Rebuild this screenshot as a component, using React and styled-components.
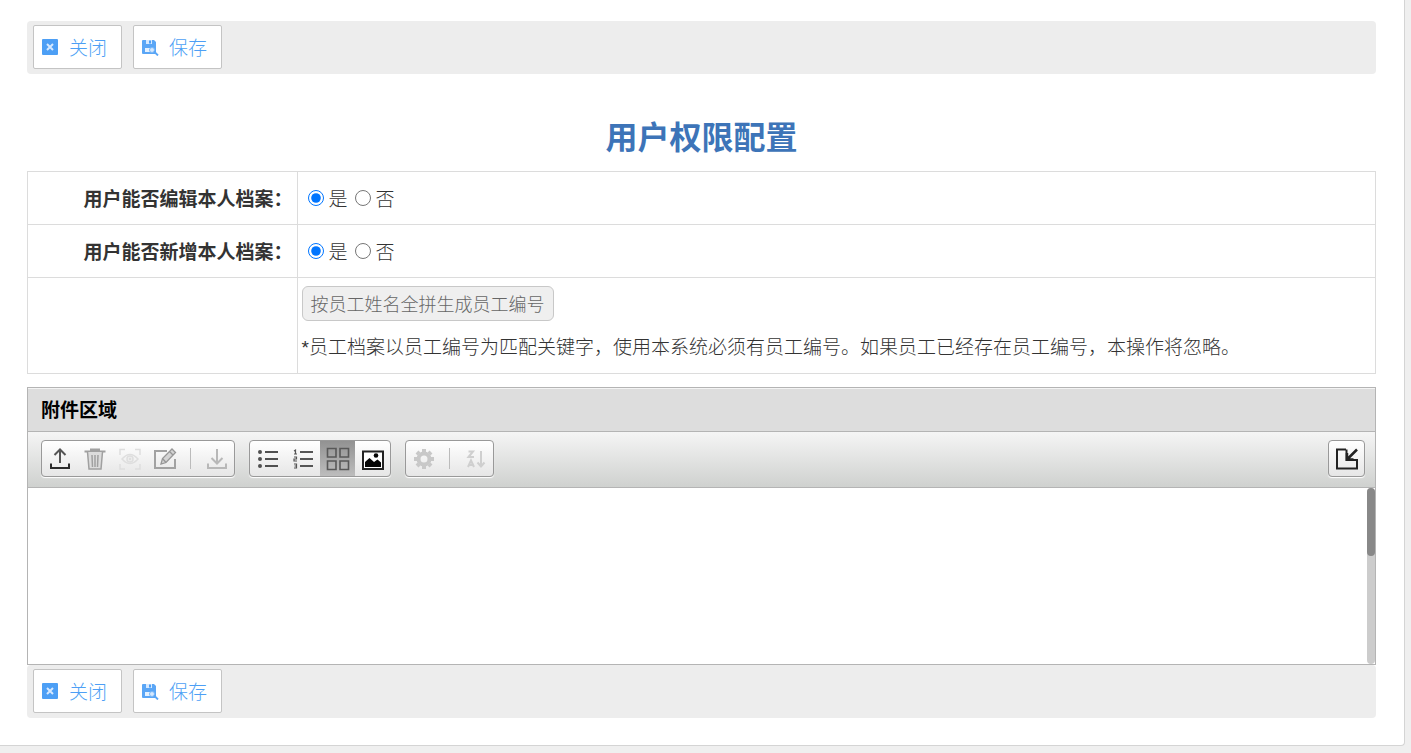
import styled, { createGlobalStyle } from "styled-components";
import { useState } from "react";

const GlobalStyle = createGlobalStyle`
  * {
    box-sizing: border-box;
  }
  body {
    margin: 0;
    background-color: #efefef;
    color: #333;
    font-family: "Noto Sans", "Noto Sans CJK SC", sans-serif;
    font-size: 19px;
    font-weight: 300;
  }
  button, input {
    font: inherit;
  }
`;

const Page = styled.main`
  margin: 0 6px 7px 0;
  padding: 21px 28px 27px 27px;
  background-color: #fff;
  border: 1px solid #d4d4d4;
  border-width: 0 1px 1px 0;
  border-radius: 0 0 4px 0;
`;

const Bar = styled.div`
  display: flex;
  gap: 11px;
  padding: 4px 6px 5px;
  background-color: #ededed;
  border-radius: 4px;
`;

const BarButton = styled.button`
  display: flex;
  align-items: center;
  gap: 10px;
  height: 44px;
  padding: 0 14px 0 7px;
  background-color: #fff;
  border: 1px solid #c4c4c4;
  border-radius: 2px;
  color: #4d9ff5;
  cursor: pointer;
`;

const Title = styled.h1`
  margin: 39px 0 10px;
  color: #3d74b8;
  font-size: 32px;
  line-height: 48px;
  font-weight: 700;
  text-align: center;
`;

const Table = styled.table`
  width: 100%;
  border-collapse: collapse;
`;

const HeadCell = styled.th`
  width: 20%;
  height: 53px;
  padding: 0 4px;
  border: 1px solid #dcdcdc;
  font-weight: 700;
  text-align: right;
`;

const Cell = styled.td`
  padding: 0 4px;
  border: 1px solid #dcdcdc;
`;

const RadioGroup = styled.div`
  display: flex;
  gap: 7px;
  padding-left: 6px;
`;

const RadioLabel = styled.label`
  display: flex;
  align-items: center;
  gap: 5px;
`;

const Radio = styled.input`
  width: 16px;
  height: 16px;
  margin: 0;
`;

const GenerateButton = styled.button`
  display: block;
  height: 35px;
  margin-top: 8px;
  padding: 0 8px;
  background-color: #efefef;
  border: 1px solid #c8c8c8;
  border-radius: 6px;
  color: #666;
  font-size: 18px;
  line-height: 24px;
  cursor: pointer;
`;

const Note = styled.p`
  margin: 13px 0 11px;
  font-family: "Liberation Sans", "Noto Sans CJK SC", sans-serif;
  line-height: 28px;
`;

const Attachment = styled.section`
  margin-top: 13px;
  border: 1px solid #b4b4b4;
`;

const AttachmentTitle = styled.h2`
  margin: 0;
  padding: 1px 13px 0;
  background-color: #ddd;
  border-top: 1px solid #f4f4f4;
  border-bottom: 1px solid #b4b4b4;
  color: #000;
  font-size: 19px;
  line-height: 41px;
  font-weight: 700;
`;

const Toolbar = styled.div`
  display: flex;
  gap: 14px;
  padding: 8px 10px 10px 13px;
  background-image: linear-gradient(#f5f5f5, #cfd1cf);
  border-bottom: 1px solid #b4b4b4;
`;

const ToolGroup = styled.div`
  display: flex;
  align-items: center;
  height: 37px;
  border: 1px solid #999;
  border-radius: 4px;
  background-image: linear-gradient(#fff, #e6e6e6);
  box-shadow: 0 1px 1px #fff;
`;

const Tool = styled.button.attrs({ type: "button" })`
  display: flex;
  align-items: center;
  justify-content: center;
  width: 35px;
  height: 35px;
  padding: 0;
  border: 0;
  cursor: pointer;
  background: ${({ $active }) =>
    $active ? "linear-gradient(#929292, #bdbdbd)" : "transparent"};
`;

const Separator = styled.span`
  width: 1px;
  height: 21px;
  margin: 0 8px;
  background-color: #bbb;
`;

const Spacer = styled.div`
  flex: 1;
`;

const FileArea = styled.div`
  display: flex;
  justify-content: flex-end;
  height: 176px;
  background-color: #fff;
`;

const Track = styled.div`
  width: 8px;
  background-color: #ccc;
  border-radius: 4px;
`;

const Thumb = styled.div`
  height: 68px;
  background-color: #888;
  border-radius: 4px;
`;

const CloseIcon = () => (
  <svg width="18" height="18" viewBox="0 0 18 18">
    <rect x="1" y="1" width="16" height="16" rx="1" fill="#4d9ff5" />
    <path d="M6 6l6 6M12 6l-6 6" stroke="#d6e9ff" strokeWidth="2" />
  </svg>
);

const SaveIcon = () => (
  <svg width="18" height="18" viewBox="0 0 18 18">
    <path d="M1 3q0-1 1-1h11l2 2v12H2q-1 0-1-1z" fill="#5aa6f6" />
    <path d="M5 2h6v4H5z" fill="#d6e9ff" />
    <path d="M8 2.500h2v3H8z" fill="#4d9ff5" />
    <path d="M4 10h9v4H4z" fill="#e4f1ff" />
    <circle cx="11" cy="12" r="2.500" fill="#d6e9ff" stroke="#7ab8f8" />
    <path d="M13 13.500l4 4" stroke="#5aa6f6" strokeWidth="1.800" />
  </svg>
);

// 工具栏图标统一 24x24
const Icon = ({ children, color = "#333", width = 2 }) => (
  <svg
    width="24"
    height="24"
    viewBox="0 0 24 24"
    fill="none"
    stroke={color}
    strokeWidth={width}
  >
    {children}
  </svg>
);

const UploadIcon = () => (
  <Icon color="#555">
    <path d="M12 3v13M6.500 8L12 2.500 17.500 8" />
    <path d="M3 16.500V21h18v-4.500" stroke="#2a2a2a" />
  </Icon>
);

const TrashIcon = () => (
  <Icon color="#a0a0a0" width={1.5}>
    <path d="M1.500 4.500h21M8 4V2.500h8V4" strokeWidth="2" />
    <path d="M4.500 5l1.500 17h12l1.500-17" fill="#dcdcdc" />
    <path d="M9 8l.5 12M12 8v12M15 8l-.5 12" />
  </Icon>
);

const PreviewIcon = () => (
  <Icon color="#dedede" width={1.5}>
    <path d="M2 8V2.500h5M17 2.500h5V8M22 17v5h-5M7 22H2v-5" />
    <path d="M4 12q8-9 16 0q-8 9-16 0z" />
    <circle cx="12" cy="12" r="3" />
    <circle cx="12" cy="12" r=".7" />
  </Icon>
);

const EditIcon = () => (
  <Icon color="#979797">
    <path d="M14 4H2v17h20v-9" stroke="#a2a2a2" />
    <path
      d="M8 17l1.500-5.500L19 2l3.500 3.500-9.500 10z M9.500 11.500l3.500 4M16.500 4.500l3.500 3.500"
      strokeWidth="1.300"
      fill="#d4d4d4"
    />
  </Icon>
);

const DownloadIcon = () => (
  <Icon color="#b8b8b8">
    <path d="M12 2v14M6.500 11l5.500 5.500 5.500-5.500M3 16.500V21h18v-4.500" />
  </Icon>
);

const BulletListIcon = () => (
  <Icon color="#505050">
    <path d="M9 5h13M9 12h13M9 19h13" />
    <circle cx="4" cy="5" r="1" />
    <circle cx="4" cy="12" r="1" />
    <circle cx="4" cy="19" r="1" />
  </Icon>
);

const NumberListIcon = () => (
  <Icon color="#555" width={1.2}>
    <path d="M9 5h13M9 12h13M9 19h13" strokeWidth="2" />
    <path d="M3 4l1.500-1v4M3 7h3M3 10h2.500v2H3v2h3M3 17h2.500v4H3M3.500 19h2" />
  </Icon>
);

const GridIcon = () => (
  <Icon color="#585858" width={1.6}>
    <path d="M1.500 1.500h8.500v8.500H1.500zM14 1.500h8.500v8.500H14zM1.500 14h8.500v8.500H1.500zM14 14h8.500v8.500H14z" />
  </Icon>
);

const ImageIcon = () => (
  <Icon color="#222">
    <path d="M2 4.500h20v17.500H2z" fill="#fff" />
    <path
      d="M4 20v-5l4.500-4 4.500 4 3.500-2.500 3.500 3V20z"
      fill="#050505"
      stroke="none"
    />
    <circle cx="15" cy="8.500" r="2.300" fill="#050505" stroke="none" />
  </Icon>
);

const GearIcon = () => (
  <Icon color="#c8c8c8">
    <circle cx="12" cy="12" r="5.500" strokeWidth="4" />
    <path
      d="M12 2v3M12 19v3M2 12h3M19 12h3M5 5l2 2M17 17l2 2M5 19l2-2M17 7l2-2"
      strokeWidth="4"
    />
  </Icon>
);

const SortIcon = () => (
  <Icon color="#cfcfcf">
    <path d="M4.500 4.500H9L4.500 10H10M4 20l3-6.500L10 20M5.500 18h3" />
    <path d="M17 4v15M13.500 15.500l3.500 4 3.500-4" />
  </Icon>
);

const CollapseIcon = () => (
  <Icon color="#222">
    <path d="M11 2.500H2v19h20V13H11.500V2.500" />
    <path d="M22 2.500l-9.500 9.500M12 6v6.500h6.500" strokeWidth="2.500" />
  </Icon>
);

const ActionBar = () => {
  return (
    <Bar>
      <BarButton type="button">
        <CloseIcon />
        关闭
      </BarButton>
      <BarButton type="button">
        <SaveIcon />
        保存
      </BarButton>
    </Bar>
  );
};

const YesNo = ({ name, labelId }) => {
  const [value, setValue] = useState("是");

  return (
    <RadioGroup role="radiogroup" aria-labelledby={labelId}>
      {["是", "否"].map((item) => (
        <RadioLabel key={item}>
          <Radio
            type="radio"
            name={name}
            checked={value === item}
            onChange={() => setValue(item)}
          />
          {item}
        </RadioLabel>
      ))}
    </RadioGroup>
  );
};

const views = [
  { id: "list", title: "列表", icon: <BulletListIcon /> },
  { id: "detail", title: "详细", icon: <NumberListIcon /> },
  { id: "grid", title: "缩略图", icon: <GridIcon /> },
  { id: "image", title: "图片", icon: <ImageIcon /> },
];

const AttachmentPanel = () => {
  const [view, setView] = useState("grid");

  return (
    <Attachment>
      <AttachmentTitle>附件区域</AttachmentTitle>
      <Toolbar>
        <ToolGroup>
          <Tool aria-label="上传">
            <UploadIcon />
          </Tool>
          <Tool aria-label="删除">
            <TrashIcon />
          </Tool>
          <Tool aria-label="预览">
            <PreviewIcon />
          </Tool>
          <Tool aria-label="编辑">
            <EditIcon />
          </Tool>
          <Separator />
          <Tool aria-label="下载">
            <DownloadIcon />
          </Tool>
        </ToolGroup>
        <ToolGroup>
          {views.map(({ id, title, icon }) => (
            <Tool
              key={id}
              aria-label={title}
              $active={view === id}
              onClick={() => setView(id)}
            >
              {icon}
            </Tool>
          ))}
        </ToolGroup>
        <ToolGroup>
          <Tool aria-label="设置">
            <GearIcon />
          </Tool>
          <Separator />
          <Tool aria-label="排序">
            <SortIcon />
          </Tool>
        </ToolGroup>
        <Spacer />
        <ToolGroup>
          <Tool aria-label="收起">
            <CollapseIcon />
          </Tool>
        </ToolGroup>
      </Toolbar>
      {/* 文件列表为空，只有滚动条 */}
      <FileArea>
        <Track>
          <Thumb />
        </Track>
      </FileArea>
    </Attachment>
  );
};

const App = () => {
  return (
    <>
      <GlobalStyle />
      <Page>
        <ActionBar />
        <Title>用户权限配置</Title>
        <Table>
          <tbody>
            <tr>
              <HeadCell id="edit-label" scope="row">
                用户能否编辑本人档案：
              </HeadCell>
              <Cell>
                <YesNo name="edit" labelId="edit-label" />
              </Cell>
            </tr>
            <tr>
              <HeadCell id="add-label" scope="row">
                用户能否新增本人档案：
              </HeadCell>
              <Cell>
                <YesNo name="add" labelId="add-label" />
              </Cell>
            </tr>
            <tr>
              <HeadCell as="td" />
              <Cell>
                <GenerateButton type="button">
                  按员工姓名全拼生成员工编号
                </GenerateButton>
                <Note>
                  *员工档案以员工编号为匹配关键字，使用本系统必须有员工编号。如果员工已经存在员工编号，本操作将忽略。
                </Note>
              </Cell>
            </tr>
          </tbody>
        </Table>
        <AttachmentPanel />
        <ActionBar />
      </Page>
    </>
  );
};
export default App;
